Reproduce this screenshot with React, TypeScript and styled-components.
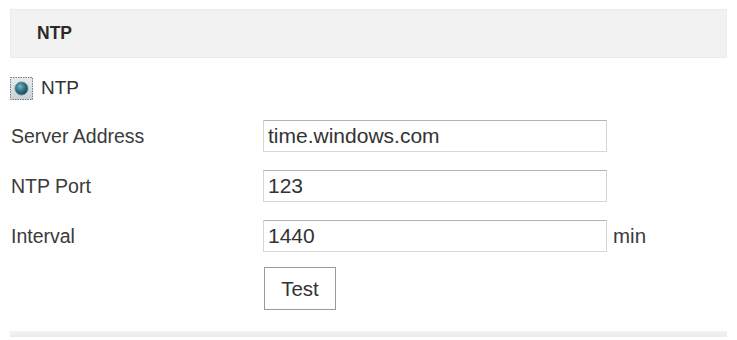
import React from "react";
import styled, { createGlobalStyle } from "styled-components";

const Global = createGlobalStyle`
  html, body { margin: 0; padding: 0; background: #ffffff; }
  body { font-family: "Liberation Sans", Arial, sans-serif; color: #333; }
`;

const Page = styled.div`
  width: 737px;
  height: 340px;
  box-sizing: border-box;
  padding: 9px 10px 0 10px;
  display: flex;
  flex-direction: column;
`;

const Header = styled.div`
  height: 49px;
  background: #f2f2f2;
  border: 1px solid #ececec;
  box-sizing: border-box;
  display: flex;
  align-items: center;
  padding-left: 26px;
  font-weight: bold;
  font-size: 17.5px;
  color: #2a2a2a;
`;

const RadioRow = styled.label`
  display: flex;
  align-items: center;
  gap: 8px;
  margin-top: 18px;
  height: 24px;
  font-size: 19px;
  color: #333;
`;

const Form = styled.div`
  display: grid;
  grid-template-columns: 253px 344px auto;
  grid-auto-rows: auto;
  row-gap: 18px;
  align-items: center;
  margin-top: 20px;
`;

const Label = styled.div`
  font-size: 19.5px;
  color: #3a3a3a;
  padding-left: 1px;
`;

const Input = styled.input`
  box-sizing: border-box;
  width: 344px;
  height: 32px;
  border: 1px solid #d6d6d6;
  border-top-color: #b4b4b4;
  background: #fff;
  padding: 0 4px;
  font-family: "Liberation Sans", Arial, sans-serif;
  font-size: 21px;
  color: #333;
  outline: none;
`;

const Unit = styled.div`
  font-size: 20.5px;
  color: #3a3a3a;
  padding-left: 6px;
`;

const Button = styled.button`
  grid-column: 2;
  justify-self: start;
  margin-left: 1px;
  margin-top: -3px;
  width: 72px;
  height: 43px;
  box-sizing: border-box;
  background: #fff;
  border: 1px solid #9a9a9a;
  font-family: "Liberation Sans", Arial, sans-serif;
  font-size: 20.5px;
  color: #333;
  padding: 0;
`;

const Divider = styled.div`
  margin-top: auto;
  margin-bottom: 3px;
  height: 6px;
  background: linear-gradient(#f4f4f4, #ebebeb);
`;

const RadioIcon = () => (
  <svg width="23" height="23" viewBox="0 0 23 23">
    <defs>
      <linearGradient id="bg" x1="0" y1="0" x2="0" y2="1">
        <stop offset="0" stopColor="#e8ecef" />
        <stop offset="1" stopColor="#c9d1d6" />
      </linearGradient>
      <radialGradient id="dot" cx="0.4" cy="0.35" r="0.7">
        <stop offset="0" stopColor="#7fb5c4" />
        <stop offset="0.5" stopColor="#2f7387" />
        <stop offset="1" stopColor="#16404d" />
      </radialGradient>
    </defs>
    <rect x="0.5" y="0.5" width="22" height="22" fill="url(#bg)" stroke="#6f7a80" strokeDasharray="1.5 1" />
    <circle cx="11.5" cy="11.5" r="6.5" fill="url(#dot)" stroke="#5d8a96" strokeWidth="1" />
  </svg>
);

export default function App() {
  return (
    <>
      <Global />
      <Page>
        <Header>NTP</Header>
        <RadioRow>
          <RadioIcon />
          NTP
        </RadioRow>
        <Form>
          <Label>Server Address</Label>
          <Input defaultValue="time.windows.com" />
          <span />
          <Label>NTP Port</Label>
          <Input defaultValue="123" />
          <span />
          <Label>Interval</Label>
          <Input defaultValue="1440" />
          <Unit>min</Unit>
          <Button>Test</Button>
        </Form>
        <Divider />
      </Page>
    </>
  );
}
